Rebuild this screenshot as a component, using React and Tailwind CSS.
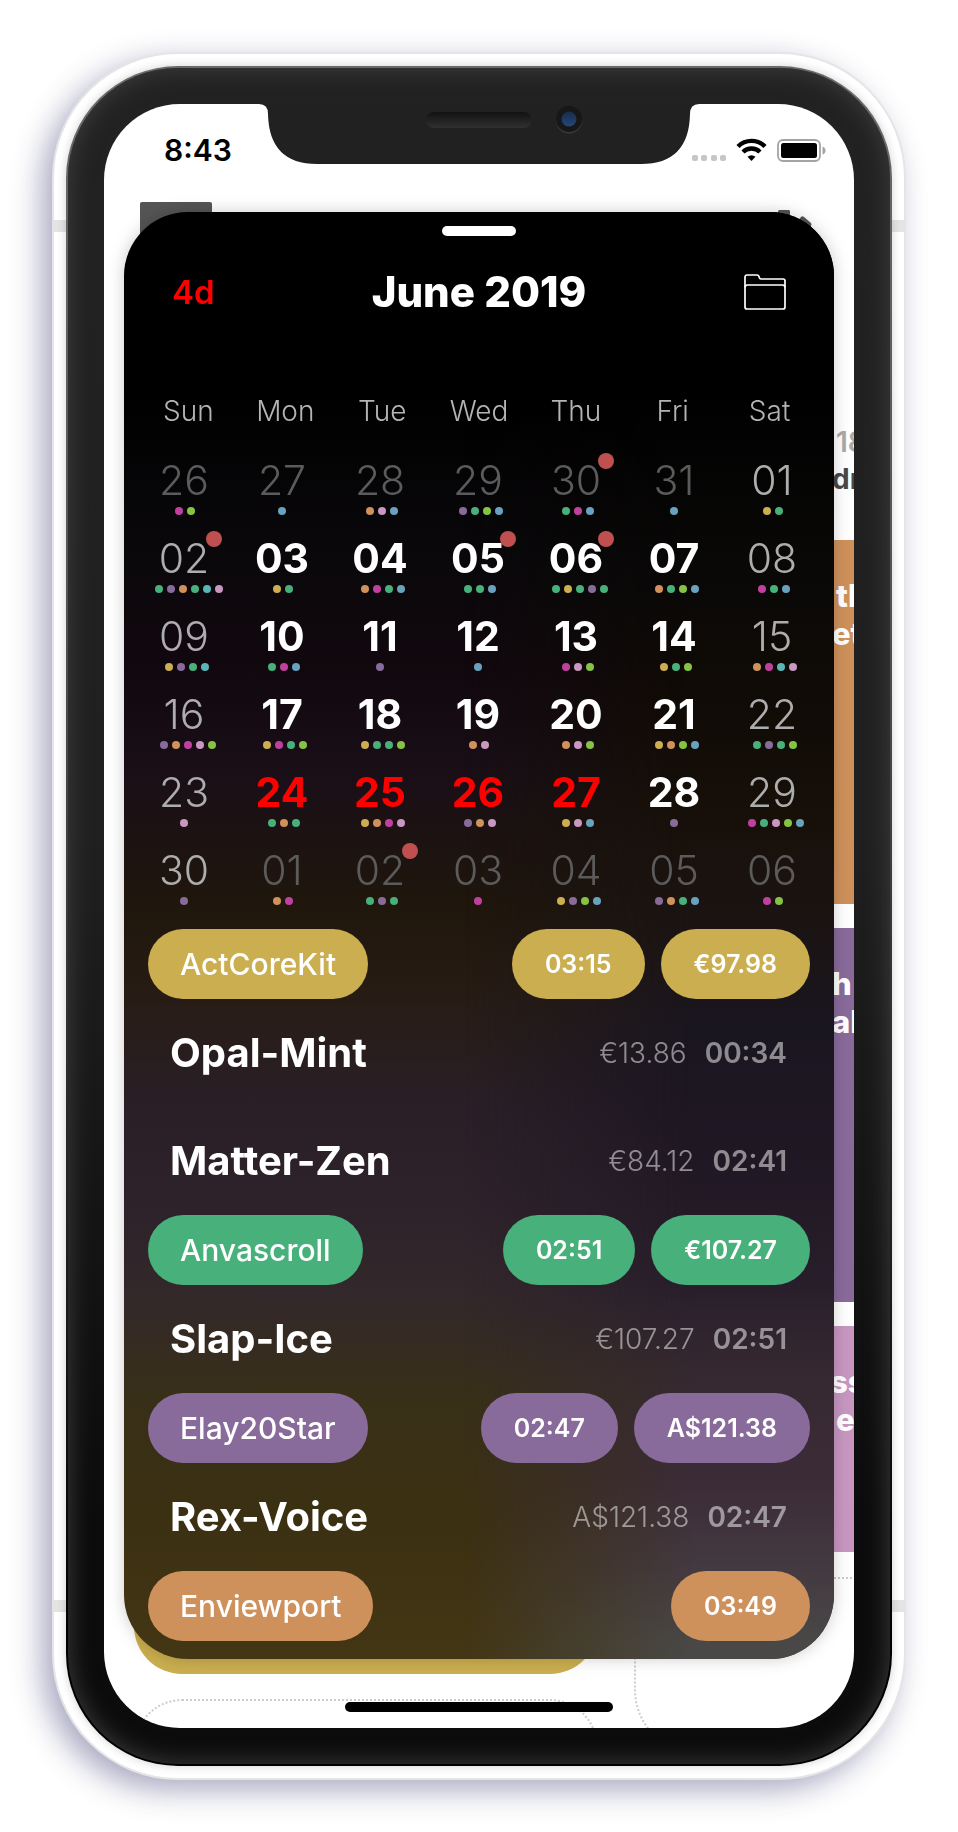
import React from "react";

const dotColors = {
  y: "bg-[#cdae50]",
  g: "bg-[#48b07b]",
  p: "bg-[#896b9b]",
  o: "bg-[#d0915b]",
  k: "bg-[#c897c2]",
  m: "bg-[#c040a0]",
  b: "bg-[#68a2be]",
  l: "bg-[#86c244]",
  t: "bg-[#58b6b6]",
};

const numberStyles = {
  out: "font-light text-[#5b5b5b]",
  off: "font-[330] text-[#adadad]",
  sun: "font-[360] text-[#adadad]",
  work: "font-bold text-white",
  red: "font-bold text-[#ff0000]",
};

const weeks = [
  [["26", "out", "ml"], ["27", "out", "b"], ["28", "out", "okb"], ["29", "out", "pglb"], ["30", "out", "gmb", 1], ["31", "out", "b"], ["01", "sun", "yg"]],
  [["02", "off", "gpogtk", 1], ["03", "work", "yg"], ["04", "work", "omgb"], ["05", "work", "ggb", 1], ["06", "work", "gygpg", 1], ["07", "work", "oglb"], ["08", "off", "mgb"]],
  [["09", "off", "ypgt"], ["10", "work", "gmb"], ["11", "work", "p"], ["12", "work", "b"], ["13", "work", "mkl"], ["14", "work", "ygl"], ["15", "off", "omtk"]],
  [["16", "off", "pomkl"], ["17", "work", "ymgl"], ["18", "work", "yggl"], ["19", "work", "ok"], ["20", "work", "okl"], ["21", "work", "yolb"], ["22", "off", "gpgl"]],
  [["23", "off", "k"], ["24", "red", "gog"], ["25", "red", "yomk"], ["26", "red", "pok"], ["27", "red", "ykb"], ["28", "work", "p"], ["29", "off", "mgklb"]],
  [["30", "sun", "p"], ["01", "out", "om"], ["02", "out", "gpg", 1], ["03", "out", "m"], ["04", "out", "yplb"], ["05", "out", "pogb"], ["06", "out", "ml"]],
];

const projects = [
  { name: "ActCoreKit", color: "bg-[#cbae4f]", totals: ["03:15", "€97.98"], tasks: [["Opal-Mint", "€13.86", "00:34"], ["Matter-Zen", "€84.12", "02:41"]] },
  { name: "Anvascroll", color: "bg-[#48b07b]", totals: ["02:51", "€107.27"], tasks: [["Slap-Ice", "€107.27", "02:51"]] },
  { name: "Elay20Star", color: "bg-[#896b9b]", totals: ["02:47", "A$121.38"], tasks: [["Rex-Voice", "A$121.38", "02:47"]] },
  { name: "Enviewport", color: "bg-[#cf915b]", totals: ["03:49"], tasks: [] },
];

function Day({ day }) {
  const [label, kind, dots, marked] = day;
  return (
    <td className="relative h-[78px] p-0 align-top">
      <div className={`text-center text-[41px] leading-[38px] ${numberStyles[kind]}`}>{label}</div>
      <div className="mt-2 flex justify-center gap-1" style={{ paddingLeft: (dots.length - 1) * 2 }}>
        {dots.split("").map((d, i) => (
          <span key={i} className={`size-2 rounded-full ${dotColors[d]}`} />
        ))}
      </div>
      {marked && <span className="absolute -top-2 left-1/2 ml-[22px] size-4 rounded-full bg-[#c05050]" />}
    </td>
  );
}

function Calendar() {
  return (
    <>
      <div className="mt-[83px] grid grid-cols-7 px-4 text-center text-[28px] leading-8 font-light text-[#b4b4b4]">
        {["Sun", "Mon", "Tue", "Wed", "Thu", "Fri", "Sat"].map((d) => (
          <div key={d}>{d}</div>
        ))}
      </div>
      <div className="mt-[34px] pr-[13px] pl-[11px]">
        <table aria-label="June 2019" className="w-full table-fixed border-collapse">
          <tbody>
            {weeks.map((week, w) => (
              <tr key={w}>
                {week.map((day, i) => (
                  <Day key={i} day={day} />
                ))}
              </tr>
            ))}
          </tbody>
        </table>
      </div>
    </>
  );
}

function Project({ project }) {
  return (
    <section>
      <div className="flex h-[70px] gap-4 px-6 text-white">
        <button type="button" className={`mr-auto rounded-full px-8 text-[30px] font-medium ${project.color}`}>
          {project.name}
        </button>
        {project.totals.map((t) => (
          <button key={t} type="button" className={`rounded-full px-[33px] pt-0.5 text-[25px] font-semibold ${project.color}`}>
            {t}
          </button>
        ))}
      </div>
      {project.tasks.map(([name, price, time]) => (
        <div key={name} className="flex h-[108px] items-center pr-[47px] pl-[46px]">
          <h2 className="mr-auto text-[40px] font-bold text-white">{name}</h2>
          <span className="text-[28px] font-[350] text-white/50">{price}</span>
          <span className="ml-[18px] text-[28px] font-semibold text-white/50">{time}</span>
        </div>
      ))}
    </section>
  );
}

function Sheet() {
  return (
    <div className="relative mx-5 overflow-hidden rounded-[64px] bg-[linear-gradient(to_bottom,#000_0%,#000_12%,#0a080b_24%,#12080f_32%,#1a0f17_39%,#1f160c_48%,#271c14_54%,#2a1f27_62%,#2f232b_70%,#33282a_75%,#382f18_82%,#3b3012_90%,#433614_100%)] pb-[18px]">
      <div className="absolute inset-0 bg-[linear-gradient(to_bottom,#000_0%,#000_12%,#090807_24%,#100b06_34%,#171009_42%,#1b1414_50%,#1a1620_57%,#201824_66%,#281e2b_74%,#352830_80%,#3c2c38_88%,#443a41_94%,#494847_99%)] [mask-image:linear-gradient(to_right,transparent_48%,black_80%)]" />
      <div className="relative">
        <div className="flex justify-center pt-3.5">
          <button type="button" aria-label="Close sheet" className="h-2.5 w-[74px] rounded-full bg-white" />
        </div>
        <header className="mt-9 flex h-10 items-center justify-between px-12">
          <button type="button" className="w-[42px] pt-0.5 text-[33px] font-semibold text-[#f00]">4d</button>
          <h1 className="text-[42px] leading-10 font-extrabold text-white">June 2019</h1>
          <button type="button" aria-label="Projects">
            <svg viewBox="0 0 42 36" className="h-9 w-[42px]" fill="none" stroke="white" strokeWidth="1.7">
              <path d="M1 33V3a2 2 0 0 1 2-2h10q1.500 0 2 1.500l.4 1.200q.5 1.300 2 1.300H39a2 2 0 0 1 2 2V33a2 2 0 0 1-2 2H3a2 2 0 0 1-2-2Z" />
              <path d="M1 13.500q0-2.500 2.500-2.500H38.500q2.500 0 2.500 2.500" />
            </svg>
          </button>
        </header>
        <Calendar />
        {projects.map((p) => (
          <Project key={p.name} project={p} />
        ))}
      </div>
    </div>
  );
}

function StatusBar() {
  return (
    <div className="relative flex h-[108px] items-start justify-between">
      <span className="mt-7 ml-[60px] text-[30px] leading-9 font-semibold text-black">8:43</span>
      <svg viewBox="0 0 134 24" className="mt-[34px] mr-7 h-6 w-[134px]">
        <g fill="#c6c6c6">
          <rect x="0" y="17" width="6" height="6" rx="2" />
          <rect x="9" y="17" width="6" height="6" rx="2" />
          <rect x="19" y="17" width="6" height="6" rx="2" />
          <rect x="28" y="17" width="6" height="6" rx="2" />
        </g>
        <g fill="none" stroke="black" strokeWidth="4.400">
          <path d="M46 8.500a19 19 0 0 1 27 0" />
          <path d="M51 14a12 12 0 0 1 17 0" />
        </g>
        <path d="M59.500 23l-4-4.200q4-3 8 0Z" fill="black" />
        <rect x="86" y="2" width="42" height="21" rx="5" fill="none" stroke="#a3a3a3" strokeWidth="1.800" />
        <rect x="89" y="5" width="36" height="15" rx="2.500" fill="black" />
        <path d="M130.500 8.500q3 1 3 4t-3 4Z" fill="#a3a3a3" />
      </svg>
    </div>
  );
}

function Event({ color, lines, height }) {
  return (
    <div className={`mb-6 overflow-hidden pt-[37px] text-[31px] leading-[38px] font-extrabold whitespace-nowrap text-white ${color} ${height}`}>
      {lines.map(([text, pad]) => (
        <div key={text} className={pad}>{text}</div>
      ))}
    </div>
  );
}

function Backdrop() {
  return (
    <div className="absolute inset-0 overflow-hidden">
      <div className="absolute top-[98px] left-9 h-[72px] w-[72px] rounded-[2px] bg-[#555]" />
      <svg viewBox="0 0 34 30" className="absolute top-[106px] right-[42px] h-[30px] w-[34px]" fill="#555">
        <path d="M0 4V1.500Q0 0 1.500 0h9.500Q12 0 12 1.500V8H0Z" />
        <path d="M17 14 23 7q1.500-1.500 3 0l7 6q1 1.500 0 3l-3 6Z" />
      </svg>
      <div className="absolute top-0 right-0 w-[24px] pt-[313px]">
        <div className="h-[123px] overflow-hidden pt-[7px] whitespace-nowrap">
          <div className="pl-1.5 text-[28px] leading-[37px] font-semibold text-[#aaa]">18</div>
          <div className="pl-0.5 text-[28px] leading-[37px] font-bold text-[#484848]">dr</div>
        </div>
        <Event color="bg-[#cf915b]" height="h-[364px]" lines={[["th", "pl-1.5"], ["et", "pl-0.5"]]} />
        <Event color="bg-[#896b9b]" height="h-[374px]" lines={[["h", "pl-0.5"], ["al", "pl-0.5"]]} />
        <Event color="bg-[#c797c2]" height="h-[226px]" lines={[["ss", "pl-0"], ["e", "pl-1.5"]]} />
      </div>
      <div className="absolute right-[-210px] bottom-[-26px] h-[177px] w-[430px] rounded-[64px] border-2 border-dotted border-[#ccc]" />
      <div className="absolute bottom-[54px] left-[30px] h-[200px] w-[464px] rounded-[48px] bg-[#cbae4f]" />
      <div className="absolute bottom-[-100px] left-[30px] h-[129px] w-[464px] rounded-[48px] border-2 border-dotted border-[#ccc]" />
    </div>
  );
}

function Notch() {
  return (
    <div className="absolute inset-x-0 top-0 flex justify-center">
      <svg viewBox="0 0 440 60" className="h-[60px] w-[440px]">
        <defs>
          <linearGradient id="speaker" x1="0" y1="0" x2="0" y2="1">
            <stop offset="0" stopColor="#121212" />
            <stop offset="1" stopColor="#303030" />
          </linearGradient>
          <linearGradient id="lens" x1="0" y1="0" x2="0" y2="1">
            <stop offset="0" stopColor="#182b4c" />
            <stop offset="1" stopColor="#244878" />
          </linearGradient>
        </defs>
        <path d="M0 0H440Q431 0 431 10Q430 60 382 60H58Q10 60 9 10Q9 0 0 0Z" fill="#212121" />
        <rect x="167" y="8" width="106" height="16" rx="8" fill="url(#speaker)" />
        <circle cx="310" cy="16.500" r="13" fill="#3a3a3a" />
        <circle cx="310" cy="15" r="13" fill="#171717" />
        <circle cx="310" cy="15" r="7.500" fill="url(#lens)" />
      </svg>
    </div>
  );
}

export default function App() {
  return (
    <main className="min-h-screen overflow-hidden bg-white px-[52px] pt-[52px] pb-[52px] font-['Inter','Liberation_Sans',sans-serif]">
      <div className="relative mx-auto max-w-[854px] rounded-[126px] border-2 border-[#e5e5e8] bg-white p-3 shadow-[-10px_10px_30px_rgba(50,50,110,0.42)]">
        <div className="absolute inset-x-[-2px] top-[166px] h-3 bg-[#e4e4e4]" />
        <div className="absolute inset-x-[-2px] bottom-[166px] h-3 bg-[#e4e4e4]" />
        <div className="relative rounded-[112px] bg-[linear-gradient(to_bottom,#6a6a6a_0%,#555_30%,#111_80%,#000_92%)] p-0.5 shadow-[0_0_10px_rgba(0,0,0,0.18)]">
          <div className="rounded-[110px] bg-[linear-gradient(to_bottom,#222_0%,#202020_45%,#0c0c0c_85%)] p-9 shadow-[inset_0_0_24px_#404040]">
            <div className="relative overflow-hidden rounded-[76px] bg-white">
              <Backdrop />
              <StatusBar />
              <div className="relative rounded-[64px] [filter:drop-shadow(0_0_8px_rgba(0,0,0,0.2))]">
                <Sheet />
              </div>
              <div className="relative flex h-[69px] items-end justify-center pb-4">
                <span className="mt-auto h-2.5 w-[268px] rounded-full bg-black" />
              </div>
              <Notch />
            </div>
          </div>
        </div>
      </div>
    </main>
  );
}
